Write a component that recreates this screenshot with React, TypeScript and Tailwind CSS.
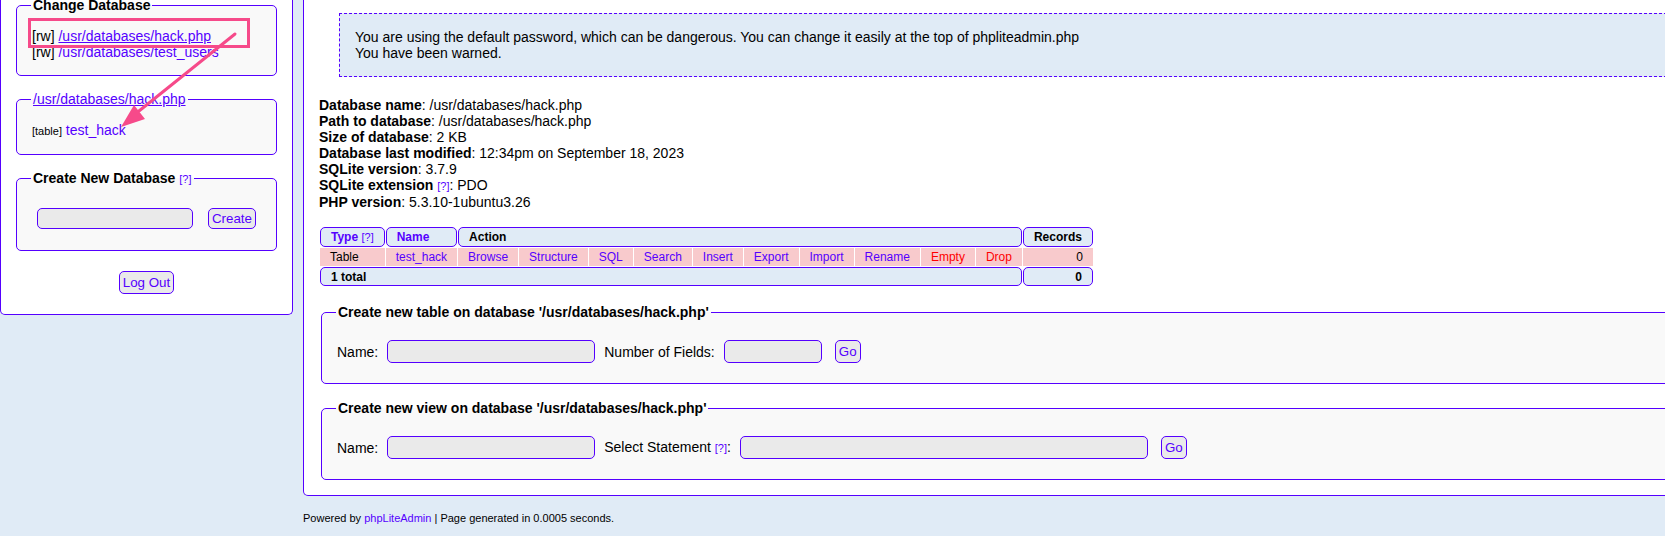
import React from "react";

function Help() {
  return <span className="text-[11px] text-[#5500ff]">[?]</span>;
}

function Sidebar() {
  return (
    <div className="w-[293px] shrink-0 self-start rounded-b-[5px] border border-t-0 border-[#5500ff] bg-white pb-[15px]">
      <fieldset className="-mt-[3px] mx-[15px] rounded-[5px] border border-[#5500ff] bg-[#f9f9f9] px-[15px] pb-[15px] pt-[15px]">
        <legend className="-ml-[1px] px-[2px] leading-[16px] font-bold">Change Database</legend>
        <div>
          [rw] <a className="text-[#5500ff] underline">/usr/databases/hack.php</a>
        </div>
        <div>
          [rw] <a className="text-[#5500ff]">/usr/databases/test_users</a>
        </div>
      </fieldset>
      <fieldset className="mt-[15px] mx-[15px] rounded-[5px] border border-[#5500ff] bg-[#f9f9f9] px-[15px] pb-[15px] pt-[15px]">
        <legend className="-ml-[1px] px-[2px] leading-[16px]">
          <a className="text-[#5500ff] underline">/usr/databases/hack.php</a>
        </legend>
        <div>
          <span className="text-[11px]">[table]</span> <a className="text-[#5500ff]">test_hack</a>
        </div>
      </fieldset>
      <fieldset className="mt-[15px] mx-[15px] rounded-[5px] border border-[#5500ff] bg-[#f9f9f9] px-[15px] pb-[15px] pt-[15px]">
        <legend className="-ml-[1px] px-[2px] leading-[16px]">
          <b>Create New Database</b> <Help />
        </legend>
        <div className="flex h-[33px] items-center">
          <input className="ml-[5px] h-[21px] w-[156px] rounded-[5px] border border-[#5500ff] bg-[#eaeaea] outline-none" />
          <button className="ml-[15px] h-[21px] w-[48px] rounded-[5px] border border-[#5500ff] bg-[#eaeaea] text-[13.33px] leading-[15px] text-[#5500ff]">
            Create
          </button>
        </div>
      </fieldset>
      <div className="mt-[15px] flex h-[33px] items-center justify-center">
        <button className="h-[23px] w-[55px] rounded-[5px] border border-[#5500ff] bg-[#eaeaea] text-[13.33px] leading-[15px] text-[#5500ff]">
          Log Out
        </button>
      </div>
    </div>
  );
}

function Main() {
  const actions = ["Browse", "Structure", "SQL", "Search", "Insert", "Export", "Import", "Rename"];
  return (
    <div className="w-[1450px] rounded-bl-[5px] border border-t-0 border-[#5500ff] bg-white px-[15px] pb-[15px] pt-[13px]">
      <div className="mx-[20px] mb-[20px] border border-dashed border-[#5500ff] bg-[#e0ebf6] p-[15px]">
        <div>You are using the default password, which can be dangerous. You can change it easily at the top of phpliteadmin.php</div>
        <div>You have been warned.</div>
      </div>
      <div>
        <div><b>Database name</b>: /usr/databases/hack.php</div>
        <div><b>Path to database</b>: /usr/databases/hack.php</div>
        <div><b>Size of database</b>: 2 KB</div>
        <div><b>Database last modified</b>: 12:34pm on September 18, 2023</div>
        <div><b>SQLite version</b>: 3.7.9</div>
        <div><b>SQLite extension</b> <Help />: PDO</div>
        <div><b>PHP version</b>: 5.3.10-1ubuntu3.26</div>
      </div>
      <table className="mt-[16px] border-separate border-spacing-[1px] text-[12px] leading-[14px]">
        <tbody>
          <tr>
            <td className="h-[20px] whitespace-nowrap rounded-[5px] border border-[#5500ff] bg-[#e0ebf6] px-[10px] py-0">
              <a className="font-bold text-[#5500ff]">Type</a> <Help />
            </td>
            <td className="h-[20px] rounded-[5px] border border-[#5500ff] bg-[#e0ebf6] px-[10px] py-0">
              <a className="font-bold text-[#5500ff]">Name</a>
            </td>
            <td colSpan={10} className="h-[20px] rounded-[5px] border border-[#5500ff] bg-[#e0ebf6] px-[10px] py-0 font-bold">
              Action
            </td>
            <td className="h-[20px] rounded-[5px] border border-[#5500ff] bg-[#e0ebf6] px-[10px] py-0 text-right font-bold">
              Records
            </td>
          </tr>
          <tr>
            <td className="h-[18px] bg-[#f8cacc] px-[10px] py-0">Table</td>
            <td className="h-[18px] bg-[#f8cacc] px-[10px] py-0 text-[#5500ff]">test_hack</td>
            {actions.map((a) => (
              <td key={a} className="h-[18px] bg-[#f8cacc] px-[10px] py-0 text-center text-[#5500ff]">
                {a}
              </td>
            ))}
            <td className="h-[18px] bg-[#f8cacc] px-[10px] py-0 text-center text-[#ff0000]">Empty</td>
            <td className="h-[18px] bg-[#f8cacc] px-[10px] py-0 text-center text-[#ff0000]">Drop</td>
            <td className="h-[18px] bg-[#f8cacc] px-[10px] py-0 text-right">0</td>
          </tr>
          <tr>
            <td colSpan={12} className="h-[19px] rounded-[5px] border border-[#5500ff] bg-[#e0ebf6] px-[10px] py-0 font-bold">
              1 total
            </td>
            <td className="h-[19px] rounded-[5px] border border-[#5500ff] bg-[#e0ebf6] px-[10px] py-0 text-right font-bold">
              0
            </td>
          </tr>
        </tbody>
      </table>
      <fieldset className="mx-[2px] mt-[17px] rounded-[5px] border border-[#5500ff] bg-[#f9f9f9] px-[15px] pb-[15px] pt-[15px]">
        <legend className="-ml-[1px] px-[2px] font-bold leading-[16px]">Create new table on database '/usr/databases/hack.php'</legend>
        <div className="flex h-[33px] items-center">
          <span>Name:</span>
          <input className="ml-[9px] h-[23px] w-[208px] rounded-[5px] border border-[#5500ff] bg-[#eaeaea] outline-none" />
          <span className="ml-[9px]">Number of Fields:</span>
          <input className="ml-[9px] h-[23px] w-[98px] rounded-[5px] border border-[#5500ff] bg-[#eaeaea] outline-none" />
          <button className="ml-[13px] h-[23px] w-[26px] rounded-[5px] border border-[#5500ff] bg-[#eaeaea] text-[13.33px] leading-[15px] text-[#5500ff]">
            Go
          </button>
        </div>
      </fieldset>
      <fieldset className="mx-[2px] mt-[16px] rounded-[5px] border border-[#5500ff] bg-[#f9f9f9] px-[15px] pb-[15px] pt-[15px]">
        <legend className="-ml-[1px] px-[2px] font-bold leading-[16px]">Create new view on database '/usr/databases/hack.php'</legend>
        <div className="flex h-[33px] items-center">
          <span>Name:</span>
          <input className="ml-[9px] h-[23px] w-[208px] rounded-[5px] border border-[#5500ff] bg-[#eaeaea] outline-none" />
          <span className="ml-[9px] whitespace-nowrap">
            Select Statement <Help />:
          </span>
          <input className="ml-[9px] h-[23px] w-[408px] rounded-[5px] border border-[#5500ff] bg-[#eaeaea] outline-none" />
          <button className="ml-[13px] h-[23px] w-[26px] rounded-[5px] border border-[#5500ff] bg-[#eaeaea] text-[13.33px] leading-[15px] text-[#5500ff]">
            Go
          </button>
        </div>
      </fieldset>
    </div>
  );
}

function Annotation() {
  return (
    <svg className="pointer-events-none absolute left-0 top-0" width="300" height="140" viewBox="0 0 300 140">
      <rect x="29.5" y="19.5" width="219" height="27" fill="none" stroke="#f64a8a" strokeWidth="3" />
      <line x1="235" y1="34" x2="139" y2="111" stroke="#f64a8a" strokeWidth="3" strokeLinecap="round" />
      <polygon points="121,127 134,105 145,119" fill="#f64a8a" />
    </svg>
  );
}

export default function App() {
  return (
    <div className="relative min-h-[536px] w-full overflow-hidden bg-[#e0ebf6] font-['Liberation_Sans',Arial,Helvetica,sans-serif] text-[14px] leading-[16px] text-black">
      <div className="flex items-start">
        <Sidebar />
        <div className="shrink-0 pl-[10px]">
          <Main />
          <div className="pt-[16px] text-[11px] leading-[13px]">
            Powered by <a className="text-[#5500ff]">phpLiteAdmin</a> | Page generated in 0.0005 seconds.
          </div>
        </div>
      </div>
      <Annotation />
    </div>
  );
}
